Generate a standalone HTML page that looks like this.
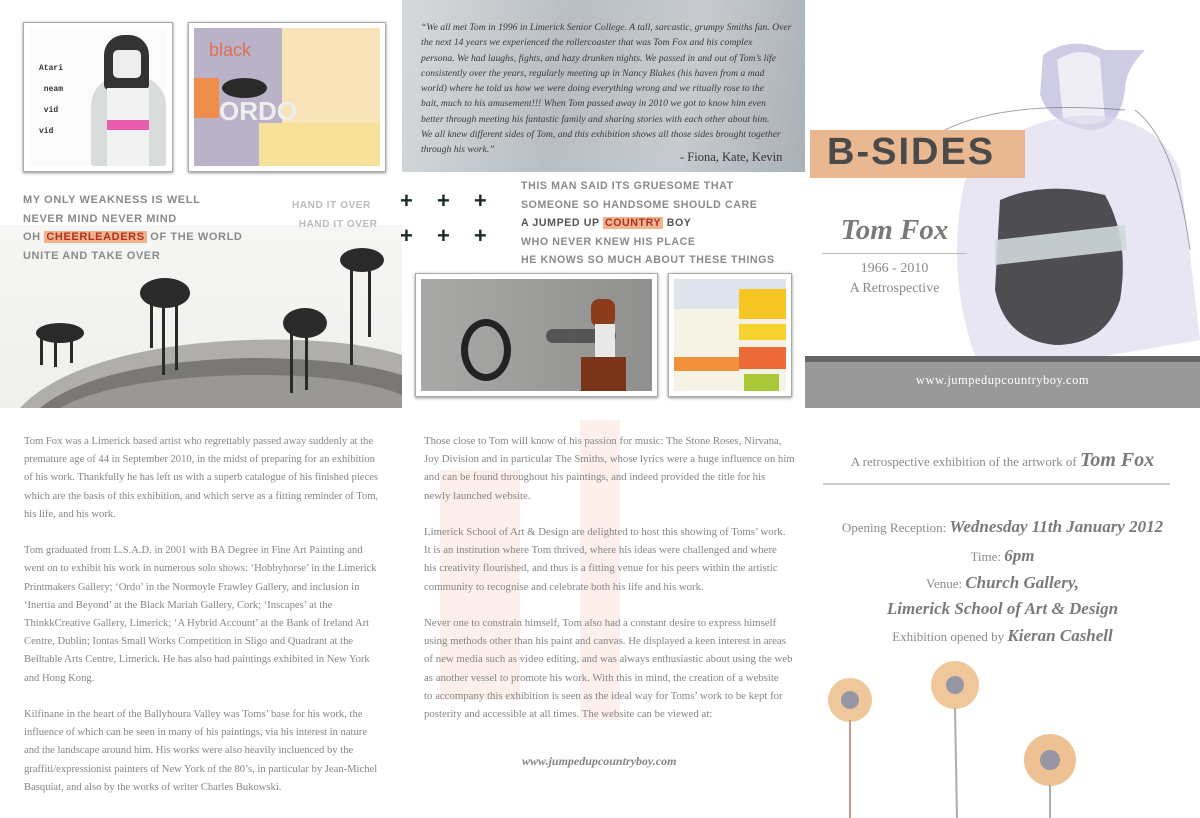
<!DOCTYPE html>
<html><head><meta charset="utf-8"><style>
*{margin:0;padding:0;box-sizing:border-box}
body{width:1200px;height:818px;position:relative;overflow:hidden;background:#fff;font-family:"Liberation Serif",serif;color:#7a7a7a}
.a{position:absolute}
.fr{position:absolute;background:#fff;border:1px solid #aaa;box-shadow:0 1px 3px rgba(0,0,0,.45);padding:5px}
.fr>div{width:100%;height:100%;position:relative;overflow:hidden}
.st{font-family:"Liberation Sans",sans-serif;font-weight:bold;color:#8a8a8a;font-size:11px;letter-spacing:.6px;line-height:18.5px;white-space:nowrap}
.p{position:absolute;font-size:10.6px;white-space:nowrap;color:#858585;line-height:18.2px}
.c{position:absolute;left:805px;width:395px;text-align:center;white-space:nowrap;color:#8a8a8a}
.bi{font-weight:bold;font-style:italic;color:#7a7a7a}
</style></head><body>

<!-- LEFT TOP PANEL -->
<div class="a" style="left:0;top:225px;width:402px;height:183px;background:linear-gradient(#f6f6f4,#efefec)"></div>
<svg class="a" style="left:0;top:225px" width="402" height="183">
<path d="M20 183 C60 140 150 118 250 115 C320 113 370 120 402 130 L402 183Z" fill="#b0aeaa"/>
<path d="M40 183 C80 150 160 135 250 133 C320 133 370 140 402 150 L402 183Z" fill="#7a7874"/>
<path d="M60 183 C100 160 180 150 260 150 C330 150 380 160 402 170 L402 183Z" fill="#9a9894"/>
<g fill="#2a2a2a"><ellipse cx="60" cy="108" rx="24" ry="10"/><rect x="40" y="112" width="3" height="28"/><rect x="54" y="112" width="3" height="30"/><rect x="70" y="110" width="3" height="28"/>
<ellipse cx="165" cy="68" rx="25" ry="15"/><rect x="150" y="78" width="3" height="45"/><rect x="162" y="80" width="3" height="70"/><rect x="175" y="80" width="3" height="65"/>
<ellipse cx="305" cy="98" rx="22" ry="15"/><rect x="290" y="108" width="3" height="60"/><rect x="305" y="110" width="3" height="55"/>
<ellipse cx="362" cy="35" rx="22" ry="12"/><rect x="350" y="40" width="3" height="100"/><rect x="368" y="42" width="3" height="70"/></g>
</svg>
<div class="fr" style="left:23px;top:22px;width:150px;height:150px"><div style="background:#fbfbfb">
<div class="a" style="left:10px;top:30px;font-family:'Liberation Mono',monospace;font-size:8px;color:#333;line-height:21px;font-weight:bold">Atari<br>&nbsp;neam<br>&nbsp;vid<br>vid</div>
<div class="a" style="left:62px;top:48px;width:75px;height:95px;background:#d8dcdc;border-radius:30px 30px 10px 10px"></div>
<div class="a" style="left:75px;top:7px;width:45px;height:55px;background:#333;border-radius:20px 20px 5px 5px"></div>
<div class="a" style="left:84px;top:22px;width:28px;height:28px;background:#eee;border-radius:5px"></div>
<div class="a" style="left:78px;top:60px;width:42px;height:80px;background:#f2f2f2"></div>
<div class="a" style="left:78px;top:92px;width:42px;height:10px;background:#e85cb0"></div>
</div></div>
<div class="fr" style="left:188px;top:22px;width:198px;height:150px"><div style="background:#b9b2c9">
<div class="a" style="left:88px;top:0;width:100px;height:140px;background:#f8e4b8"></div>
<div class="a" style="left:65px;top:95px;width:125px;height:45px;background:#f6e09a"></div>
<div class="a" style="left:0;top:50px;width:25px;height:40px;background:#f08d4a"></div>
<div class="a" style="left:28px;top:50px;width:45px;height:20px;background:#2a2a2a;border-radius:50%"></div>
<div class="a" style="left:15px;top:12px;color:#e07050;font-size:18px;font-family:'Liberation Sans',sans-serif">black</div>
<div class="a" style="left:25px;top:68px;color:#eee;font-size:26px;font-weight:bold;font-family:'Liberation Sans',sans-serif">ORDO</div>
</div></div>
<div class="a st" style="left:23px;top:191px">MY ONLY WEAKNESS IS WELL<br>NEVER MIND NEVER MIND<br>OH <span style="background:#f0b48c;color:#b03028;padding:0 2px">CHEERLEADERS</span> OF THE WORLD<br>UNITE AND TAKE OVER</div>
<div class="a st" style="left:292px;top:197px;color:#bbb;font-size:10px">HAND IT OVER<br>&nbsp;&nbsp;HAND IT OVER</div>

<!-- MIDDLE TOP -->
<div class="a" style="left:402px;top:0;width:403px;height:172px;background:linear-gradient(100deg,#d6dadd,#b8bec3 40%,#c6cbcf 70%,#aab0b6)"></div>
<div class="a" style="left:421px;top:20px;font-style:italic;font-size:9.7px;line-height:15.3px;color:#3a3a3a;white-space:nowrap">“We all met Tom in 1996 in Limerick Senior College. A tall, sarcastic, grumpy Smiths fan. Over<br>the next 14 years we experienced the rollercoaster that was Tom Fox and his complex<br>persona. We had laughs, fights, and hazy drunken nights. We passed in and out of Tom’s life<br>consistently over the years, regularly meeting up in Nancy Blakes (his haven from a mad<br>world) where he told us how we were doing everything wrong and we ritually rose to the<br>bait, much to his amusement!!! When Tom passed away in 2010 we got to know him even<br>better through meeting his fantastic family and sharing stories with each other about him.<br>We all knew different sides of Tom, and this exhibition shows all those sides brought together<br>through his work.”</div>
<div class="a" style="left:680px;top:150px;font-size:12.5px;color:#333">- Fiona, Kate, Kevin</div>
<div class="a" style="left:400px;top:183px;font-family:'Liberation Sans',sans-serif;font-weight:bold;font-size:22px;color:#1a2a2a;letter-spacing:9px;line-height:35px">+&nbsp;+ +<br>+&nbsp;+ +</div>
<div class="a st" style="left:521px;top:177px;font-size:10.6px">THIS MAN SAID ITS GRUESOME THAT<br>SOMEONE SO HANDSOME SHOULD CARE<br><span style="color:#555">A JUMPED UP <span style="background:#f0b48c;color:#b03028;padding:0 2px">COUNTRY</span> BOY</span><br>WHO NEVER KNEW HIS PLACE<br>HE KNOWS SO MUCH ABOUT THESE THINGS</div>
<div class="fr" style="left:415px;top:273px;width:243px;height:124px"><div style="background:linear-gradient(90deg,#a9a9a7,#8f8f8d)">
<div class="a" style="left:40px;top:40px;width:50px;height:62px;border:7px solid #222;border-radius:50%"></div>
<div class="a" style="left:125px;top:50px;width:70px;height:14px;background:#555;border-radius:7px"></div>
<div class="a" style="left:170px;top:20px;width:24px;height:28px;background:#8a3c1c;border-radius:8px"></div>
<div class="a" style="left:174px;top:45px;width:20px;height:35px;background:#e8e8e8"></div>
<div class="a" style="left:160px;top:78px;width:45px;height:35px;background:#7a3418"></div>
</div></div>
<div class="fr" style="left:668px;top:273px;width:124px;height:124px"><div style="background:#f6f2e6">
<div class="a" style="left:0;top:0;width:112px;height:30px;background:#dde4ec"></div>
<div class="a" style="left:65px;top:10px;width:47px;height:30px;background:#f6c624"></div>
<div class="a" style="left:65px;top:45px;width:47px;height:16px;background:#f8d230"></div>
<div class="a" style="left:65px;top:68px;width:47px;height:22px;background:#ec6a38"></div>
<div class="a" style="left:0;top:78px;width:65px;height:14px;background:#f2913c"></div>
<div class="a" style="left:70px;top:95px;width:35px;height:17px;background:#a8c838"></div>
</div></div>

<!-- RIGHT TOP -->
<svg class="a" style="left:805px;top:0" width="395" height="356">
<path d="M238 55 Q265 35 300 50 L340 50 Q320 70 320 90 Q315 130 285 130 Q245 125 235 95Z" fill="#c6c2e0" opacity=".85"/>
<path d="M252 60 Q275 45 295 58 L300 120 Q280 130 258 118Z" fill="#eeeef4"/>
<path d="M160 180 Q200 120 280 115 Q350 115 375 170 L395 340 L300 356 L170 356 Q140 270 160 180Z" fill="#dcd8ec" opacity=".65"/>
<path d="M195 200 Q240 180 300 195 Q325 240 315 300 Q300 345 250 345 Q200 340 190 290Z" fill="#4e4e52"/>
<path d="M190 240 L320 225 L322 250 L190 265Z" fill="#cfd8dc" opacity=".9"/>
<path d="M140 130 Q200 100 320 110 M330 110 Q370 140 385 250" stroke="#667" fill="none" opacity=".6"/>
</svg>
<div class="a" style="left:810px;top:130px;width:215px;height:48px;background:#e9b891"></div>
<div class="a" style="left:827px;top:131px;font-family:'Liberation Sans',sans-serif;font-weight:bold;font-size:38px;color:#4a4a4a;letter-spacing:2px">B-SIDES</div>
<div class="a" style="left:822px;top:214px;width:145px;text-align:center;font-style:italic;font-weight:bold;font-size:29px;color:#7a7a7a">Tom Fox</div>
<div class="a" style="left:822px;top:253px;width:145px;height:1px;background:#bbb"></div>
<div class="a" style="left:822px;top:259px;width:145px;text-align:center;font-size:14px;line-height:20px;color:#8a8a8a">1966 - 2010<br>A Retrospective</div>
<div class="a" style="left:805px;top:356px;width:395px;height:6px;background:#666"></div>
<div class="a" style="left:805px;top:362px;width:395px;height:46px;background:#999"></div>
<div class="a" style="left:805px;top:373px;width:395px;text-align:center;color:#fff;font-size:12.5px;letter-spacing:.5px">www.jumpedupcountryboy.com</div>

<!-- BOTTOM LEFT -->
<div class="p" style="left:24px;top:433px">Tom Fox was a Limerick based artist who regrettably passed away suddenly at the<br>premature age of 44 in September 2010, in the midst of preparing for an exhibition<br>of his work. Thankfully he has left us with a superb catalogue of his finished pieces<br>which are the basis of this exhibition, and which serve as a fitting reminder of Tom,<br>his life, and his work.<br>&nbsp;<br>Tom graduated from L.S.A.D. in 2001 with BA Degree in Fine Art Painting and<br>went on to exhibit his work in numerous solo shows: ‘Hobbyhorse’ in the Limerick<br>Printmakers Gallery; ‘Ordo’ in the Normoyle Frawley Gallery, and inclusion in<br>‘Inertia and Beyond’ at the Black Mariah Gallery, Cork; ‘Inscapes’ at the<br>ThinkkCreative Gallery, Limerick; ‘A Hybrid Account’ at the Bank of Ireland Art<br>Centre, Dublin; Iontas Small Works Competition in Sligo and Quadrant at the<br>Belltable Arts Centre, Limerick. He has also had paintings exhibited in New York<br>and Hong Kong.<br>&nbsp;<br>Kilfinane in the heart of the Ballyhoura Valley was Toms’ base for his work, the<br>influence of which can be seen in many of his paintings, via his interest in nature<br>and the landscape around him. His works were also heavily incluenced by the<br>graffiti/expressionist painters of New York of the 80’s, in particular by Jean-Michel<br>Basquiat, and also by the works of writer Charles Bukowski.</div>

<!-- BOTTOM MIDDLE -->
<div class="a" style="left:440px;top:470px;width:80px;height:230px;background:#fbe8e4;opacity:.7"></div>
<div class="a" style="left:580px;top:420px;width:40px;height:300px;background:#fbe8e4;opacity:.7"></div>
<div class="p" style="left:424px;top:432px;font-size:10.8px">Those close to Tom will know of his passion for music: The Stone Roses, Nirvana,<br>Joy Division and in particular The Smiths, whose lyrics were a huge influence on him<br>and can be found throughout his paintings, and indeed provided the title for his<br>newly launched website.<br>&nbsp;<br>Limerick School of Art &amp; Design are delighted to host this showing of Toms’ work.<br>It is an institution where Tom thrived, where his ideas were challenged and where<br>his creativity flourished, and thus is a fitting venue for his peers within the artistic<br>community to recognise and celebrate both his life and his work.<br>&nbsp;<br>Never one to constrain himself, Tom also had a constant desire to express himself<br>using methods other than his paint and canvas. He displayed a keen interest in areas<br>of new media such as video editing, and was always enthusiastic about using the web<br>as another vessel to promote his work. With this in mind, the creation of a website<br>to accompany this exhibition is seen as the ideal way for Toms’ work to be kept for<br>posterity and accessible at all times. The website can be viewed at:</div>
<div class="p" style="left:522px;top:752px;font-style:italic;font-weight:bold;font-size:12px">www.jumpedupcountryboy.com</div>

<!-- BOTTOM RIGHT -->
<div class="c" style="top:449px;font-size:13px">A retrospective exhibition of the artwork of <span class="bi" style="font-size:20px">Tom Fox</span></div>
<div class="a" style="left:823px;top:483px;width:347px;height:2px;background:#ccc"></div>
<div class="c" style="top:517px;font-size:13px">Opening Reception: <span class="bi" style="font-size:17px">Wednesday 11th January 2012</span></div>
<div class="c" style="top:546px;font-size:13px">Time: <span class="bi" style="font-size:17px">6pm</span></div>
<div class="c" style="top:573px;font-size:13px">Venue: <span class="bi" style="font-size:17px">Church Gallery,</span></div>
<div class="c" style="top:599px;font-size:13px"><span class="bi" style="font-size:17px">Limerick School of Art &amp; Design</span></div>
<div class="c" style="top:626px;font-size:13px">Exhibition opened by <span class="bi" style="font-size:17px">Kieran Cashell</span></div>
<svg class="a" style="left:805px;top:660px" width="395" height="158">
<g opacity=".7"><circle cx="45" cy="40" r="22" fill="#e8b070"/><circle cx="45" cy="40" r="9" fill="#6a6a80"/><path d="M45 60 L45 158" stroke="#b07070" stroke-width="2"/>
<circle cx="150" cy="25" r="24" fill="#eab070"/><circle cx="150" cy="25" r="9" fill="#6a6a80"/><path d="M150 48 L152 158" stroke="#8a8a8a" stroke-width="2"/>
<circle cx="245" cy="100" r="26" fill="#e8a868"/><circle cx="245" cy="100" r="10" fill="#6a6a80"/><path d="M245 125 L245 158" stroke="#8a8a8a" stroke-width="2"/></g>
</svg>
</body></html>
